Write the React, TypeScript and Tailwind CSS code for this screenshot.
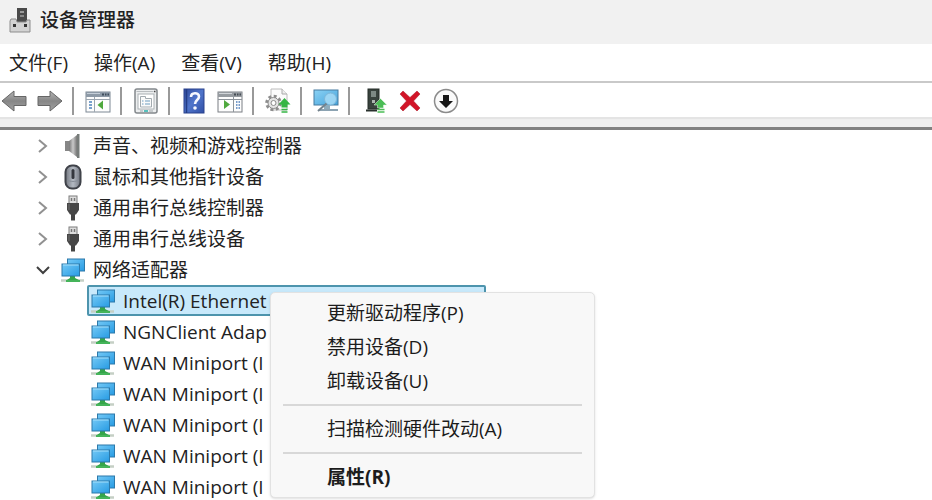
import React from "react";

function AppIcon() {
  return (
    <svg width="24" height="28" viewBox="0 0 24 28" aria-hidden="true">
      <rect x="9" y="2" width="10" height="14" fill="#4a4a4a" />
      <rect x="12" y="5" width="4" height="2" fill="#9a9a9a" />
      <rect x="12" y="9" width="4" height="2" fill="#888" />
      <path d="M3 13h5l1 3h9l1-2h3v12H2V15z" fill="#d2d2d2" stroke="#8d8d8d" />
      <rect x="5" y="18" width="3" height="3" fill="#333" />
      <rect x="16" y="18" width="3" height="3" fill="#333" />
    </svg>
  );
}

function ArrowIcon({ forward = false }: { forward?: boolean }) {
  return (
    <svg width="28" height="24" viewBox="0 0 28 24" aria-hidden="true">
      <defs>
        <linearGradient id={forward ? "arrowForward" : "arrowBack"} x1="0" y1="0" x2="0" y2="1">
          <stop offset="0" stopColor="#b5b5b5" />
          <stop offset="0.5" stopColor="#868686" />
          <stop offset="1" stopColor="#a2a2a2" />
        </linearGradient>
      </defs>
      <path
        d={forward ? "M2 7.500h12V2l12 10-12 10v-5.500H2z" : "M26 7.500H14V2L2 12l12 10v-5.500h12z"}
        fill={forward ? "url(#arrowForward)" : "url(#arrowBack)"}
        stroke="#666"
        strokeLinejoin="round"
      />
    </svg>
  );
}

function TreePaneIcon() {
  return (
    <svg width="26" height="24" viewBox="0 0 26 24" aria-hidden="true">
      <rect x="1" y="3" width="24" height="20" fill="#fdfdfd" stroke="#7d8894" />
      <rect x="1" y="3" width="24" height="5" fill="#8d99a6" />
      <path d="M2 4.500h13" stroke="#c5ced8" />
      <path d="M17 5.500h2M20 5.500h1.500M22.500 5.500h1.500" stroke="#3f4d5c" strokeWidth="2" />
      <path d="M9.500 8v15M1 10.500h24" stroke="#9ca6b0" />
      <path d="M4 13h3M4 16h3M4 19h3" stroke="#4d83bd" strokeWidth="1.500" />
      <path d="M18 11.500v9L12.500 16z" fill="#4fa83d" />
    </svg>
  );
}

function ActionPaneIcon() {
  return (
    <svg width="26" height="24" viewBox="0 0 26 24" aria-hidden="true">
      <rect x="1" y="3" width="24" height="20" fill="#fdfdfd" stroke="#7b7f84" />
      <rect x="1" y="3" width="24" height="5" fill="#969ba0" />
      <path d="M2 4.500h13" stroke="#d0d4d8" />
      <path d="M17 5.500h2M20 5.500h1.500M22.500 5.500h1.500" stroke="#454c54" strokeWidth="2" />
      <path d="M16.500 8v15M1 10.500h24" stroke="#8d949b" />
      <path d="M19 13h4M19 16h4M19 19h4" stroke="#4d7ebc" strokeWidth="1.500" strokeDasharray="1.500 1" />
      <path d="M7 11v9l6-4.500z" fill="#4fa83d" />
    </svg>
  );
}

function PropertiesIcon() {
  return (
    <svg width="26" height="26" viewBox="0 0 26 26" aria-hidden="true">
      <rect x="2" y="1" width="22" height="24" rx="2" fill="#eceeef" stroke="#83888c" strokeWidth="1.500" />
      <path d="M3.500 3.500h17" stroke="#b9bdc0" />
      <path d="M21 3.500h1.500" stroke="#444" strokeWidth="1.500" />
      <rect x="5" y="6" width="16" height="15" fill="#fff" stroke="#aab0b4" />
      <path d="M7.500 8.500h5v2h6v8.500h-11z" fill="#fafafa" stroke="#a3abb0" />
      <path d="M9 13h1.500M12 13h5M9 16h1.500M12 16h5" stroke="#6d9dc0" />
      <path d="M7 23h3M16 23h4" stroke="#a0a7ab" />
      <path d="M11 23h4" stroke="#27b1ad" strokeWidth="1.500" />
    </svg>
  );
}

function HelpIcon() {
  return (
    <svg width="22" height="26" viewBox="0 0 22 26" aria-hidden="true">
      <defs>
        <linearGradient id="helpFill" x1="0" y1="0" x2="1" y2="1">
          <stop offset="0" stopColor="#304a9c" />
          <stop offset="0.500" stopColor="#5075cb" />
          <stop offset="1" stopColor="#304fa5" />
        </linearGradient>
      </defs>
      <rect x="1" y="1" width="20" height="24" fill="url(#helpFill)" stroke="#2a428d" />
      <path d="M3.500 1v24" stroke="#233c85" strokeWidth="1.500" />
      <path d="M8 9c0-5 8-5 8-.5 0 3.500-4 3.500-4 7.500" fill="none" stroke="#f6f8ff" strokeWidth="2.600" />
      <circle cx="12" cy="20" r="1.800" fill="#f6f8ff" />
    </svg>
  );
}

function ScanDriverIcon() {
  return (
    <svg width="26" height="26" viewBox="0 0 26 26" aria-hidden="true">
      <path d="M6 1h11l5 5v16H6z" fill="#fbfbfb" stroke="#bcbcbc" />
      <path d="M17 1v5h5" fill="#eee" stroke="#aaa" />
      <circle cx="8.500" cy="15" r="6.800" fill="none" stroke="#8d8d8d" strokeWidth="3" strokeDasharray="2.900 2.440" />
      <circle cx="8.500" cy="15" r="5.500" fill="#e4e4e4" stroke="#8c8c8c" />
      <circle cx="8.500" cy="15" r="2.500" fill="#fff" stroke="#8c8c8c" />
      <path d="M19.500 10l6 6.500h-3v3h-6v-3h-3z" fill="#35b544" />
      <path d="M16.500 21.500h6M16.500 24h6" stroke="#35b544" strokeWidth="1.500" />
    </svg>
  );
}

function ScanHardwareIcon() {
  return (
    <svg width="28" height="26" viewBox="0 0 28 26" aria-hidden="true">
      <defs>
        <linearGradient id="scanScreen" x1="0" y1="0" x2="1" y2="1">
          <stop offset="0" stopColor="#8bd2f4" />
          <stop offset="1" stopColor="#45a3dc" />
        </linearGradient>
      </defs>
      <rect x="2" y="2" width="24" height="15" fill="url(#scanScreen)" stroke="#477b9f" />
      <path d="M12 17h6v4h-6z" fill="#8eabbb" />
      <path d="M7 22h19" stroke="#8ca3b2" strokeWidth="2" />
      <circle cx="18.500" cy="11" r="6" fill="#a6daf6" fillOpacity="0.850" stroke="#7eb7d9" />
      <path d="M14.500 15.500L6 23" stroke="#74838d" strokeWidth="2" />
    </svg>
  );
}

function UpdateDriverIcon() {
  return (
    <svg width="26" height="26" viewBox="0 0 26 26" aria-hidden="true">
      <rect x="7" y="1" width="11" height="20" fill="#38423d" stroke="#252d29" />
      <rect x="10" y="3" width="5" height="6" fill="#7d8984" />
      <rect x="11" y="12" width="3" height="3" fill="#adb5b1" />
      <path d="M5 22.500h11" stroke="#28302c" strokeWidth="2" />
      <path d="M19.500 10.500l6.500 6.500h-3.500v3h-6v-3H13z" fill="#4bbd55" stroke="#e8f6e8" strokeWidth="0.500" />
      <path d="M16.500 21.500h7M16.500 24h7" stroke="#4bbd55" strokeWidth="1.500" />
    </svg>
  );
}

function UninstallIcon() {
  return (
    <svg width="24" height="24" viewBox="0 0 24 24" aria-hidden="true">
      <path
        d="M5 2l7 6.500L19 2l3 3-6.500 7L22 19l-3 3-7-6.500L5 22l-3-3 6.500-7L2 5z"
        fill="#d21528"
        stroke="#a91222"
        strokeWidth="0.500"
        strokeLinejoin="round"
      />
    </svg>
  );
}

function DisableIcon() {
  return (
    <svg width="26" height="26" viewBox="0 0 26 26" aria-hidden="true">
      <circle cx="13" cy="13" r="11.500" fill="#fafafa" stroke="#8b8b8b" strokeWidth="1.500" />
      <path d="M10 7h6v6h4l-7 7-7-7h4z" fill="#171717" />
    </svg>
  );
}

function SpeakerIcon() {
  return (
    <svg width="24" height="26" viewBox="0 0 24 26" aria-hidden="true">
      <defs>
        <linearGradient id="speakerCone" x1="0" y1="0" x2="1" y2="0">
          <stop offset="0" stopColor="#787878" />
          <stop offset="0.500" stopColor="#c9c9c9" />
          <stop offset="1" stopColor="#777" />
        </linearGradient>
      </defs>
      <rect x="4" y="8" width="6" height="10" fill="#868686" />
      <path d="M8 8l8-6v22l-8-6z" fill="url(#speakerCone)" />
      <path d="M16 1h2.500v24H16z" fill="#777c7a" />
    </svg>
  );
}

function MouseIcon() {
  return (
    <svg width="24" height="26" viewBox="0 0 24 26" aria-hidden="true">
      <defs>
        <linearGradient id="mouseBody" x1="0" y1="0" x2="1" y2="0">
          <stop offset="0" stopColor="#73777f" />
          <stop offset="0.500" stopColor="#b4bac3" />
          <stop offset="1" stopColor="#737781" />
        </linearGradient>
      </defs>
      <rect x="4.500" y="1.500" width="15" height="23" rx="6.500" fill="url(#mouseBody)" stroke="#3f4249" strokeWidth="2" />
      <path d="M6 16c4 2 8 2 12 0" fill="none" stroke="#878e98" />
      <rect x="10.500" y="5" width="3" height="10" rx="1.500" fill="#34373e" />
    </svg>
  );
}

function UsbIcon() {
  return (
    <svg width="24" height="26" viewBox="0 0 24 26" aria-hidden="true">
      <rect x="8" y="1" width="8" height="8" fill="#dedede" stroke="#7c7c7c" />
      <path d="M10.500 3v3M13.500 3v3" stroke="#777" strokeWidth="1.500" />
      <path d="M6 8h12v7l-3 4.500H9L6 15z" fill="#474747" />
      <path d="M8 9v6" stroke="#707070" />
      <path d="M12 19v6.500" stroke="#444" strokeWidth="4" />
    </svg>
  );
}

function NetworkIcon() {
  return (
    <svg width="26" height="26" viewBox="0 0 26 26" aria-hidden="true" className="shrink-0">
      <defs>
        <linearGradient id="networkScreen" x1="0" y1="0" x2="1" y2="1">
          <stop offset="0" stopColor="#74c9f6" />
          <stop offset="1" stopColor="#279be3" />
        </linearGradient>
      </defs>
      <path d="M1 23.500h23" stroke="#c5cfc5" strokeWidth="2.500" />
      <path d="M10 18h5v3l5 2.500H6l4-2.500z" fill="#35a54a" />
      <rect x="7.500" y="2" width="17" height="12" fill="url(#networkScreen)" stroke="#2c79aa" />
      <rect x="2" y="7" width="17.500" height="12" fill="url(#networkScreen)" stroke="#2c79aa" />
      <path d="M3 8h15.500" stroke="#a6e0fb" />
      <path d="M6 24h14" stroke="#45b45a" strokeWidth="2" />
    </svg>
  );
}

function Chevron({ open }: { open: boolean }) {
  return (
    <svg width="20" height="20" viewBox="0 0 20 20" fill="none" aria-hidden="true">
      {open ? (
        <path d="M4 7l6 6 6-6" stroke="#404040" strokeWidth="2" />
      ) : (
        <path d="M6 4l7 6-7 6" stroke="#919191" strokeWidth="2" />
      )}
    </svg>
  );
}

type Tool = { label: string; icon: React.ReactNode };

const toolGroups: Tool[][] = [
  [
    { label: "后退", icon: <ArrowIcon /> },
    { label: "前进", icon: <ArrowIcon forward /> },
  ],
  [{ label: "显示/隐藏控制台树", icon: <TreePaneIcon /> }],
  [{ label: "属性", icon: <PropertiesIcon /> }],
  [
    { label: "帮助", icon: <HelpIcon /> },
    { label: "显示/隐藏操作窗格", icon: <ActionPaneIcon /> },
  ],
  [{ label: "更新驱动程序", icon: <ScanDriverIcon /> }],
  [{ label: "扫描检测硬件改动", icon: <ScanHardwareIcon /> }],
  [
    { label: "启用设备", icon: <UpdateDriverIcon /> },
    { label: "卸载设备", icon: <UninstallIcon /> },
    { label: "禁用设备", icon: <DisableIcon /> },
  ],
];

const categories = [
  { label: "声音、视频和游戏控制器", icon: <SpeakerIcon />, open: false },
  { label: "鼠标和其他指针设备", icon: <MouseIcon />, open: false },
  { label: "通用串行总线控制器", icon: <UsbIcon />, open: false },
  { label: "通用串行总线设备", icon: <UsbIcon />, open: false },
  { label: "网络适配器", icon: <NetworkIcon />, open: true },
];

const adapters = [
  "Intel(R) Ethernet",
  "NGNClient Adap",
  "WAN Miniport (I",
  "WAN Miniport (I",
  "WAN Miniport (I",
  "WAN Miniport (I",
  "WAN Miniport (I",
];

function MenuItem({ children, strong = false }: { children: React.ReactNode; strong?: boolean }) {
  return (
    <button
      type="button"
      role="menuitem"
      className={`flex h-[34px] w-full items-center pl-14 text-left ${strong ? "font-bold" : ""}`}
    >
      {children}
    </button>
  );
}

function MenuSeparator() {
  return (
    <div role="separator" className="flex h-[14px] items-center px-3">
      <div className="h-[2px] w-full bg-[#d8d8d8]" />
    </div>
  );
}

function ContextMenu() {
  return (
    <div
      role="menu"
      className="absolute top-[5px] left-[181px] w-[325px] rounded-[5px] border border-[#e2e2e2] bg-[#f8f8f8] py-[3px] text-[#1c1c1c] shadow-sm"
    >
      <MenuItem>更新驱动程序(P)</MenuItem>
      <MenuItem>禁用设备(D)</MenuItem>
      <MenuItem>卸载设备(U)</MenuItem>
      <MenuSeparator />
      <MenuItem>扫描检测硬件改动(A)</MenuItem>
      <MenuSeparator />
      <MenuItem strong>属性(R)</MenuItem>
    </div>
  );
}

export default function App() {
  return (
    <div className="flex h-screen flex-col overflow-hidden bg-white font-['Open_Sans','Noto_Sans_CJK_SC',sans-serif] text-[19px] leading-[24px] whitespace-nowrap text-[#222]">
      <header className="flex h-11 shrink-0 items-center gap-2 bg-[#f1f1f1] pb-1 pl-2">
        <AppIcon />
        <h1 className="font-medium">设备管理器</h1>
      </header>

      <nav className="flex h-[37px] shrink-0 items-center gap-[26px] pl-[9px]">
        {["文件(F)", "操作(A)", "查看(V)", "帮助(H)"].map((label) => (
          <button key={label} type="button">
            {label}
          </button>
        ))}
      </nav>

      <div
        role="toolbar"
        aria-label="工具栏"
        className="flex h-[36px] shrink-0 items-center gap-2 border-t-2 border-[#c9c9c9] pt-[2px]"
      >
        {toolGroups.map((group, index) => (
          <React.Fragment key={group[0].label}>
            {index > 0 && <div className="h-7 w-1 border-l-2 border-[#999]" />}
            {group.map((tool) => (
              <button
                key={tool.label}
                type="button"
                aria-label={tool.label}
                className="flex h-7 w-7 items-center justify-center"
              >
                {tool.icon}
              </button>
            ))}
          </React.Fragment>
        ))}
      </div>
      <div className="h-[13px] shrink-0 border-t-2 border-b-3 border-t-[#e4e4e4] border-b-[#808080] bg-[#eeeeee]" />

      <main className="min-h-0 flex-1">
        <ul>
          {categories.map((category) => (
            <li key={category.label} className="flex h-[31px] items-center gap-2 pl-[33px]">
              <button type="button" aria-label={category.label} aria-expanded={category.open}>
                <Chevron open={category.open} />
              </button>
              <span className="flex w-6 justify-center">{category.icon}</span>
              <span>{category.label}</span>
            </li>
          ))}
        </ul>
        <ul className="pl-[87px]">
          {adapters.map((name, index) => (
            <li
              key={index}
              className={
                index === 0
                  ? "relative flex h-[31px] w-[399px] items-center gap-2 rounded-[2px] border-2 border-[#4d94ad] bg-[#c8e9fb] pl-[2px]"
                  : "flex h-[31px] items-center gap-2 pl-1"
              }
            >
              <span className="flex w-6 justify-center">
                <NetworkIcon />
              </span>
              <span>{name}</span>
              {index === 0 && <ContextMenu />}
            </li>
          ))}
        </ul>
      </main>
    </div>
  );
}
